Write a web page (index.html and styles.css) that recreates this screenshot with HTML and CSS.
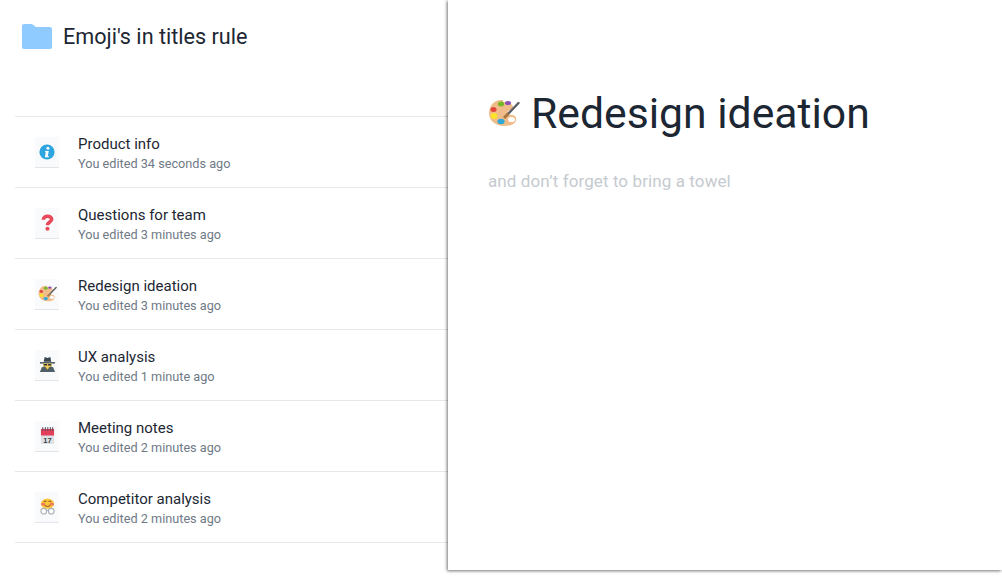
FILE: index.html
```html
<!DOCTYPE html>
<html>

	<head>
		<meta charset="UTF-8">
		<title>Emoji's in titles rule</title>
		<link rel="stylesheet" href="styles.css">
	</head>

	<body>
		<svg class="defs" width="0" height="0">
			<symbol id="palette" viewBox="0 0 32 28">
				<path d="M15 1C7 0 1 6 1 14c0 8 7 13 15 13 5 0 11-1 12-6 .6-3-1-5-4-5-3 .2-5-1-4-3 .6-2 4-2 5-5 .5-3-5-5-10-5z" fill="#f0bd8a"/>
				<ellipse cx="13" cy="5" rx="3.2" ry="2.5" fill="#77b82a"/>
				<ellipse cx="20" cy="4" rx="3" ry="2" fill="#8e4fb5"/>
				<ellipse cx="5.5" cy="10.5" rx="3" ry="2.5" fill="#e2453c"/>
				<ellipse cx="6" cy="17" rx="3.4" ry="3" fill="#fbe32b"/>
				<ellipse cx="13" cy="22.5" rx="3.6" ry="2.7" fill="#2fa8d5"/>
				<ellipse cx="23.5" cy="20.5" rx="3.4" ry="2.6" fill="#fff"/>
				<path d="M30.500 4 20 15" stroke="#5a5f66" stroke-width="2.400" stroke-linecap="round"/>
				<path d="M20.500 14.500 16 19" stroke="#a5763f" stroke-width="3"/>
			</symbol>
		</svg>

		<div class="page">
			<div class="side">
				<div class="head">
					<svg class="folder" viewBox="0 0 30 25">
						<path d="M0 2a2 2 0 0 1 2-2h8l4 3h14a2 2 0 0 1 2 2v18a2 2 0 0 1-2 2H2a2 2 0 0 1-2-2z" fill="#90cbff"/>
					</svg>
					<h1>Emoji's in titles rule</h1>
				</div>

				<div class="list">
					<div class="item">
						<div class="thumb">
							<svg viewBox="0 0 16 16" width="16" height="16">
								<circle cx="8" cy="8" r="7.600" fill="#2fa5e0"/>
								<circle cx="8.900" cy="4.300" r="1.500" fill="#fff"/>
								<path d="M6.200 7h3.600l-1 5h1v1.200H5.900l.9-5h-.8z" fill="#fff"/>
							</svg>
						</div>
						<div class="info">
							<div class="name">Product info</div>
							<div class="time">You edited 34 seconds ago</div>
						</div>
					</div>
					<div class="item">
						<div class="thumb">
							<svg viewBox="0 0 14 18" width="13" height="17">
								<path d="M2.500 6c0-5 9-5 9-.5 0 3-4.500 3-4.500 6.500" fill="none" stroke="#e8495a" stroke-width="3.800"/>
								<circle cx="7" cy="15.800" r="2.200" fill="#e8495a"/>
							</svg>
						</div>
						<div class="info">
							<div class="name">Questions for team</div>
							<div class="time">You edited 3 minutes ago</div>
						</div>
					</div>
					<div class="item">
						<div class="thumb">
							<svg width="19" height="17"><use href="#palette"/></svg>
						</div>
						<div class="info">
							<div class="name">Redesign ideation</div>
							<div class="time">You edited 3 minutes ago</div>
						</div>
					</div>
					<div class="item">
						<div class="thumb">
							<svg viewBox="0 0 18 18" width="17" height="17">
								<path d="M5 6l1-5 3 1 3-1 1 5z" fill="#3a474e"/>
								<path d="M1 6.500h16V8H1z" fill="#3d4a50"/>
								<path d="M4.500 8h9v3.500h-9z" fill="#f3c33c"/>
								<path d="M5 8.500h3.500V10H5zM9.500 8.500H13V10H9.500z" fill="#2c3a40"/>
								<path d="M1 17l2-5 3-1 3 2 3-2 3 1 2 5z" fill="#4f5f67"/>
								<path d="M7 12h4l-2 2.500z" fill="#f3c33c"/>
							</svg>
						</div>
						<div class="info">
							<div class="name">UX analysis</div>
							<div class="time">You edited 1 minute ago</div>
						</div>
					</div>
					<div class="item">
						<div class="thumb">
							<svg viewBox="0 0 16 18" width="15" height="17">
								<rect x="1" y="2" width="14" height="16" fill="#dde1e4"/>
								<rect x="1" y="2" width="14" height="7" fill="#e23f5b"/>
								<path d="M3 0v4M5.700 0v4M8.300 0v4M11 0v4M13.500 0v4" stroke="#4a4f55" stroke-width="1"/>
								<text x="8" y="16.500" class="day">17</text>
							</svg>
						</div>
						<div class="info">
							<div class="name">Meeting notes</div>
							<div class="time">You edited 2 minutes ago</div>
						</div>
					</div>
					<div class="item">
						<div class="thumb">
							<svg viewBox="0 0 18 18" width="17" height="17">
								<ellipse cx="9" cy="6" rx="7" ry="5.500" fill="#fbc53f"/>
								<ellipse cx="4.500" cy="6.500" rx="2.200" ry="1.500" fill="#f0795a"/>
								<ellipse cx="13.500" cy="6.500" rx="2.200" ry="1.500" fill="#f0795a"/>
								<path d="M5 3.500h3M10 3.500h3" stroke="#7a4a1c" stroke-width="1"/>
								<path d="M6 8q3 2 6 0" fill="none" stroke="#7a4a1c" stroke-width="1"/>
								<circle cx="5" cy="14" r="3" fill="#fff" stroke="#a9b0b5" stroke-width="1.200"/>
								<circle cx="13" cy="14" r="3" fill="#fff" stroke="#a9b0b5" stroke-width="1.200"/>
								<path d="M7.500 13h3" stroke="#a9b0b5" stroke-width="1.200"/>
							</svg>
						</div>
						<div class="info">
							<div class="name">Competitor analysis</div>
							<div class="time">You edited 2 minutes ago</div>
						</div>
					</div>
				</div>
			</div>

			<div class="doc">
				<div class="title">
					<svg class="title-icon"><use href="#palette"/></svg>
					<h2>Redesign ideation</h2>
				</div>
				<p class="hint">and don’t forget to bring a towel</p>
			</div>
		</div>
	</body>

</html>
```

FILE: styles.css
```css
html, body {
	margin: 0;
	height: 576px;
	overflow: hidden;
	background: #fff;
}

body {
	font-family: Roboto, "Liberation Sans", sans-serif;
	color: #1c2733;
}

.defs {
	display: block;
	height: 0;
}

.page {
	display: flex;
	align-items: flex-start;
	height: 576px;
}

.side {
	width: 433px;
	padding-left: 15px;
	flex: none;
}

.head {
	display: flex;
	align-items: center;
	height: 116px;
	padding: 0 0 44px 7px;
	box-sizing: border-box;
}

.folder {
	width: 30px;
	height: 25px;
	margin-right: 11px;
}

.head h1 {
	margin: 0;
	font-size: 21.6px;
	font-weight: 400;
}

.list {
	border-top: 1px solid #e6e8ea;
}

.item {
	display: flex;
	align-items: center;
	height: 70px;
	border-bottom: 1px solid #e6e8ea;
	padding-left: 20px;
}

.thumb {
	display: flex;
	align-items: center;
	justify-content: center;
	width: 24px;
	height: 30px;
	margin-right: 19px;
	background: #f9fafb;
	border-bottom: 1px solid #e3e5e8;
}

.info {
	margin-top: 4px;
}

.name {
	font-size: 15px;
	line-height: 20px;
}

.time {
	font-size: 12.7px;
	line-height: 20px;
	color: #6f7a86;
}

.day {
	font: bold 8px "Liberation Sans", sans-serif;
	fill: #3a3f45;
	text-anchor: middle;
}

.doc {
	flex: 1;
	height: 570px;
	padding: 87px 0 0 40px;
	box-sizing: border-box;
	background: #fff;
	box-shadow: -1px 1px 3px rgba(0, 0, 0, 0.55);
}

.title {
	display: flex;
	align-items: center;
}

.title-icon {
	width: 32px;
	height: 28px;
	margin-right: 11px;
}

.title h2 {
	margin: 0;
	font-size: 42.7px;
	line-height: 52px;
	font-weight: 400;
}

.hint {
	margin: 30px 0 0;
	font-size: 17px;
	letter-spacing: 0.1px;
	line-height: 24px;
	color: #c5cad0;
}
```
